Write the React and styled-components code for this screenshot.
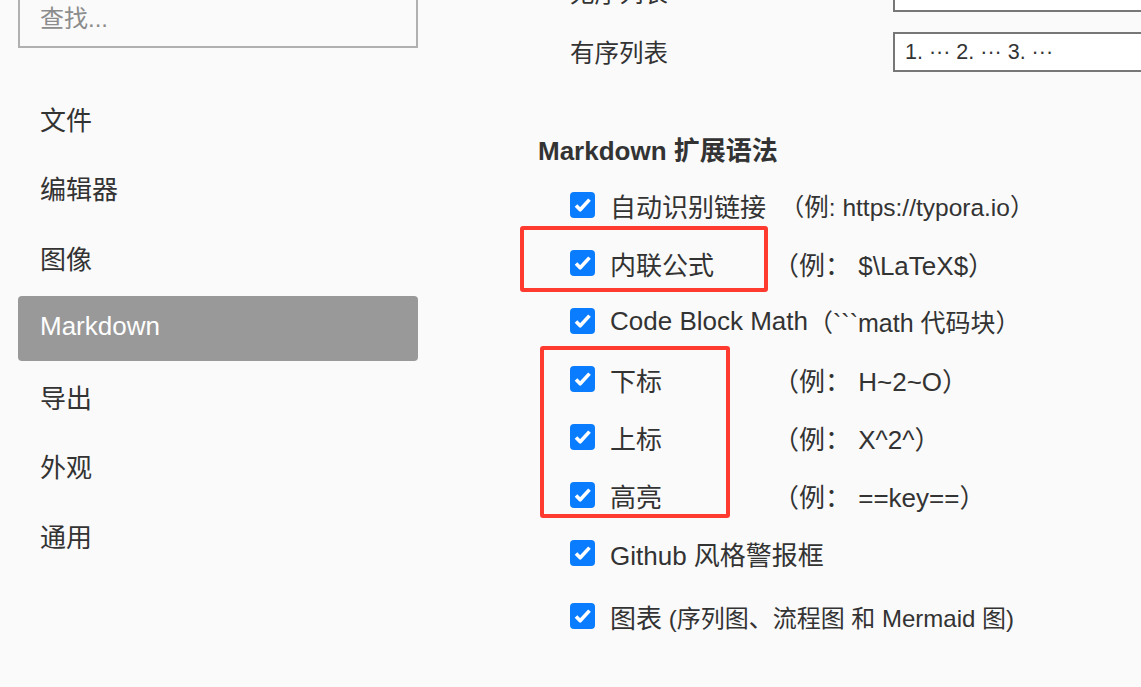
import React from "react";
import styled, { createGlobalStyle } from "styled-components";

const GlobalStyle = createGlobalStyle`
  html, body {
    margin: 0;
    padding: 0;
    background: #fafafa;
    overflow: hidden;
  }
  body {
    font-family: "Liberation Sans", "Noto Sans CJK SC", sans-serif;
    color: #333;
  }
`;

const Window = styled.div`
  display: flex;
  width: 1141px;
  height: 687px;
  overflow: hidden;
  background: #fafafa;
`;

const Sidebar = styled.aside`
  width: 436px;
  flex-shrink: 0;
  padding: 0 18px;
  box-sizing: border-box;
  display: flex;
  flex-direction: column;
`;

const Search = styled.input`
  margin-top: -8px;
  height: 56px;
  width: 100%;
  box-sizing: border-box;
  border: 2px solid #b0b0b0;
  background: #fafafa;
  padding: 0 20px 2px;
  font-size: 24px;
  font-family: inherit;
  color: #333;
  outline: none;
  &::placeholder {
    color: #8c8c8c;
  }
`;

const Nav = styled.nav`
  margin-top: 39px;
  display: flex;
  flex-direction: column;
  gap: 4.6px;
`;

const NavItem = styled.div`
  height: 65px;
  box-sizing: border-box;
  display: flex;
  align-items: center;
  padding: 0 0 3px 22px;
  font-size: 26px;
  border-radius: 4px;
  color: ${(p) => (p.$active ? "#fff" : "#333")};
  background: ${(p) => (p.$active ? "#999" : "transparent")};
`;

const Main = styled.main`
  flex: 1;
  padding-left: 102px;
  margin-top: -28px;
  display: flex;
  flex-direction: column;
`;

const FieldRow = styled.div`
  display: flex;
  align-items: center;
  padding-left: 32px;
  height: 40px;
  margin-bottom: 20px;
`;

const FieldLabel = styled.span`
  width: 323px;
  font-size: 24.5px;
  padding-bottom: 2px;
`;

const FieldBox = styled.div`
  width: 320px;
  height: 40px;
  box-sizing: border-box;
  border: 2px solid #777;
  background: #fff;
  padding-left: 10px;
  display: flex;
  align-items: center;
  font-size: 21.5px;
  white-space: pre;
`;

const Heading = styled.h3`
  margin: 44px 0 10px;
  font-size: 26px;
  line-height: 30px;
  font-weight: bold;
`;

const CheckList = styled.div`
  position: relative;
  display: flex;
  flex-direction: column;
`;

const CheckRow = styled.div`
  height: 58px;
  display: flex;
  align-items: center;
  padding-left: 32px;
  margin-top: ${(p) => (p.$spaced ? "5px" : "0")};
  font-size: 26px;
  white-space: pre;
`;

const Box = styled.span`
  width: 25px;
  height: 26px;
  border-radius: 4px;
  background: #0a7cff;
  margin-right: 15px;
  display: flex;
  align-items: center;
  justify-content: center;
  flex-shrink: 0;
`;

const Label = styled.span`
  min-width: 163px;
`;

const Example = styled.span`
  font-size: ${(p) => p.$size || 26}px;
`;

const Mark = styled.div`
  position: absolute;
  border: 4px solid #ff3b30;
  border-radius: 3px;
  box-sizing: border-box;
  pointer-events: none;
`;

function Check() {
  return (
    <Box>
      <svg width="25" height="26" viewBox="0 0 25 26">
        <path
          d="M6 13.5 L10.2 17.8 L19.5 7.6"
          fill="none"
          stroke="#fff"
          strokeWidth="3.6"
          strokeLinejoin="round"
        />
      </svg>
    </Box>
  );
}

const navItems = ["文件", "编辑器", "图像", "Markdown", "导出", "外观", "通用"];

const options = [
  { label: "自动识别链接", example: " （例: https://typora.io）", size: 24.5 },
  { label: "内联公式", example: "（例： $\\LaTeX$）" },
  { label: "Code Block Math", example: "（```math 代码块）", size: 25 },
  { label: "下标", example: "（例： H~2~O）" },
  { label: "上标", example: "（例： X^2^）" },
  { label: "高亮", example: "（例： ==key==）" },
  { label: "Github 风格警报框" },
  { label: "图表", example: " (序列图、流程图 和 Mermaid 图)", size: 24, spaced: true },
];

export default function App() {
  return (
    <Window>
      <GlobalStyle />
      <Sidebar>
        <Search placeholder="查找..." />
        <Nav>
          {navItems.map((n) => (
            <NavItem key={n} $active={n === "Markdown"}>
              {n}
            </NavItem>
          ))}
        </Nav>
      </Sidebar>
      <Main>
        <FieldRow>
          <FieldLabel>无序列表</FieldLabel>
          <FieldBox />
        </FieldRow>
        <FieldRow>
          <FieldLabel>有序列表</FieldLabel>
          <FieldBox>1. ··· 2. ··· 3. ···</FieldBox>
        </FieldRow>
        <Heading>Markdown 扩展语法</Heading>
        <CheckList>
          {options.map((o) => (
            <CheckRow key={o.label} $spaced={o.spaced}>
              <Check />
              {o.spaced ? <span>{o.label}</span> : <Label>{o.label}</Label>}
              {o.example && <Example $size={o.size}>{o.example}</Example>}
            </CheckRow>
          ))}
          <Mark style={{ left: -18, top: 50, width: 248, height: 66 }} />
          <Mark style={{ left: 2, top: 170, width: 190, height: 172 }} />
        </CheckList>
      </Main>
    </Window>
  );
}
